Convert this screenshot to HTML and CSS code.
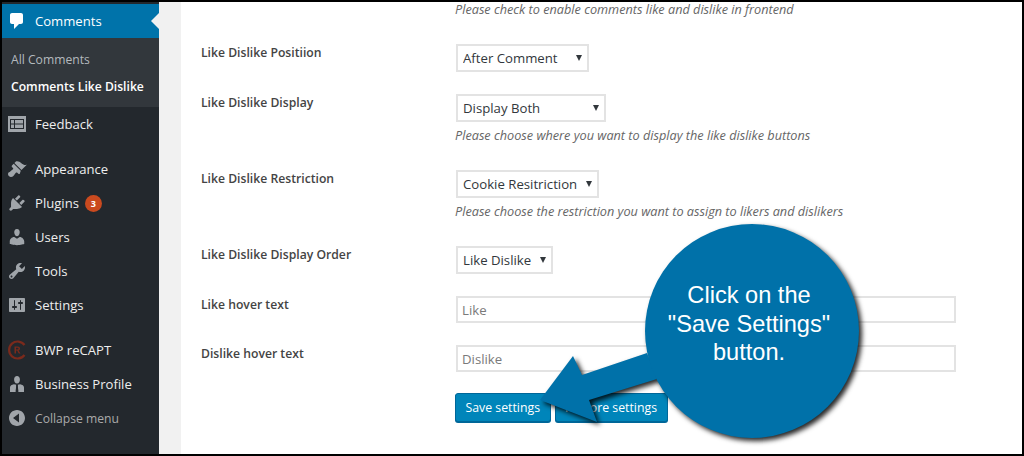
FILE: index.html
```html
<!DOCTYPE html>
<html lang="en">
<head>
<meta charset="utf-8">
<title>Comments Like Dislike</title>
<link rel="stylesheet" href="styles.css">
</head>
<body>
<div class="frame">
  <nav class="sidebar">
    <a class="item current">
      <svg class="icon" viewBox="0 0 20 20"><path d="M5 2h9c1.100 0 2 .9 2 2v7c0 1.100-.9 2-2 2h-2l-5 5v-5H5c-1.100 0-2-.9-2-2V4c0-1.100.9-2 2-2z"/></svg>
      <span>Comments</span>
    </a>
    <div class="submenu">
      <a class="sub">All Comments</a>
      <a class="sub active">Comments Like Dislike</a>
    </div>
    <a class="item">
      <svg class="icon" viewBox="0 0 20 20"><path fill-rule="evenodd" d="M1 2h18v16H1zM3 5v10h14V5zM4 6h3v3.500H4zM8 6h8v3.500H8zM4 10.500h3V14H4zM8 10.500h8V14H8z"/></svg>
      <span>Feedback</span>
    </a>
    <a class="item group">
      <svg class="icon" viewBox="0 0 20 20"><path d="M14.480 11.060L7.410 3.990l1.500-1.500c.5-.56 2.300-.47 3.510.32 1.210.8 1.430 1.280 2.910 2.100 1.180.64 2.450 1.260 4.450.85zm-.71.71L6.700 4.700 4.930 6.470c-.39.39-.39 1.020 0 1.410l1.060 1.060c.39.39.39 1.030 0 1.420-.6.6-1.430 1.110-2.210 1.690-.35.26-.7.53-1.010.84C1.430 13.230 1 14.080 1 15c0 1.660 1.340 3 3 3 .92 0 1.770-.43 2.360-1.010.31-.31.58-.66.84-1.010.58-.78 1.090-1.610 1.690-2.210.39-.39 1.020-.39 1.410 0l1.060 1.060c.39.39 1.030.39 1.420 0z"/></svg>
      <span>Appearance</span>
    </a>
    <a class="item">
      <svg class="icon" viewBox="0 0 20 20"><path d="M13.110 4.360L9.870 7.600 8 5.730l3.240-3.240c.35-.34 1.050-.2 1.560.32.52.51.66 1.210.31 1.550zm-8 1.770l.91-1.120 9.010 9.010-1.190.84c-.71.71-2.630 1.160-3.820 1.160H6.140L4.900 17.260c-.59.59-1.540.59-2.120 0-.59-.58-.59-1.530 0-2.120l1.240-1.240v-3.880c0-1.130.4-3.190 1.090-3.890zm7.260 3.970l3.240-3.240c.34-.35 1.040-.21 1.550.31.52.51.66 1.210.31 1.550l-3.240 3.250z"/></svg>
      <span>Plugins</span>
      <b class="badge">3</b>
    </a>
    <a class="item">
      <svg class="icon" viewBox="0 0 20 20"><path d="M10 9.250c-2.270 0-2.730-3.440-2.730-3.440C7 4.020 7.820 2 9.970 2c2.160 0 2.980 2.020 2.710 3.810 0 0-.41 3.440-2.680 3.440zm0 2.570L12.720 10c2.390 0 4.520 2.330 4.520 4.530v2.490s-3.650 1.130-7.240 1.130c-3.650 0-7.240-1.130-7.240-1.130v-2.490c0-2.250 1.940-4.480 4.470-4.480z"/></svg>
      <span>Users</span>
    </a>
    <a class="item">
      <svg class="icon" viewBox="0 0 20 20"><path d="M16.680 9.770c-1.340 1.340-3.300 1.670-4.950.99l-5.410 6.520c-.99.99-2.590.99-3.580 0s-.99-2.590 0-3.570l6.520-5.420c-.68-1.650-.35-3.610.99-4.950 1.280-1.280 3.120-1.620 4.720-1.060l-2.890 2.890 2.820 2.820 2.860-2.870c.53 1.580.18 3.390-1.080 4.650zM3.810 16.210c.4.39 1.040.39 1.430 0 .4-.4.4-1.040 0-1.430-.39-.4-1.030-.4-1.430 0-.39.39-.39 1.030 0 1.430z"/></svg>
      <span>Tools</span>
    </a>
    <a class="item">
      <svg class="icon" viewBox="0 0 20 20"><path fill-rule="evenodd" d="M18 16V4c0-.55-.45-1-1-1H3c-.55 0-1 .45-1 1v12c0 .55.45 1 1 1h14c.55 0 1-.45 1-1zM8 11h1c.55 0 1 .45 1 1s-.45 1-1 1H8v1.500c0 .28-.22.5-.5.5s-.5-.22-.5-.5V13H6c-.55 0-1-.45-1-1s.45-1 1-1h1V5.500c0-.28.22-.5.5-.5s.5.22.5.5V11zm5-2h-1c-.55 0-1-.45-1-1s.45-1 1-1h1V5.500c0-.28.22-.5.5-.5s.5.22.5.5V7h1c.55 0 1 .45 1 1s-.45 1-1 1h-1v5.500c0 .28-.22.5-.5.5s-.5-.22-.5-.5V9z"/></svg>
      <span>Settings</span>
    </a>
    <a class="item group">
      <svg class="icon recapt" viewBox="0 0 20 20"><path class="recapt-ring" d="M17.500 5A8.500 8.500 0 1 0 17.500 15"/><path d="M7.500 6.500h3.200c1.500 0 2.300.8 2.300 2 0 1-.6 1.700-1.500 1.900L13.500 13.500h-1.700l-1.600-2.900H9v2.900H7.500zM9 7.700v1.800h1.500c.7 0 1-.4 1-.9s-.3-.9-1-.9z"/></svg>
      <span>BWP reCAPT</span>
    </a>
    <a class="item">
      <svg class="icon" viewBox="0 0 20 20"><path d="M10 9.500c-2 0-2.900-2.200-2.900-4C7.100 3.500 8.300 2 10 2s2.900 1.500 2.900 3.500c0 1.800-.9 4-2.900 4zM6.800 10.300l2.500.5-.7 7.200H3v-4.500c0-1.700 1.800-2.800 3.800-3.200zM13.200 10.300c2 .4 3.800 1.500 3.800 3.200V18h-5.600l-.7-7.200z"/><path class="tie" d="M9.200 10.800h1.600l-.2 1.500.6 4.200-1.200 1.500-1.200-1.500.6-4.200z"/></svg>
      <span>Business Profile</span>
    </a>
    <a class="item collapse">
      <svg class="icon" viewBox="0 0 20 20"><path fill-rule="evenodd" d="M18 10c0-4.420-3.580-8-8-8s-8 3.580-8 8 3.580 8 8 8 8-3.580 8-8zM12 5.500v9L6 10z"/></svg>
      <span>Collapse menu</span>
    </a>
  </nav>

  <main class="content">
    <form class="panel">
      <p class="hint offset">Please check to enable comments like and dislike in frontend</p>

      <div class="row">
        <label class="label">Like Dislike Positiion</label>
        <div class="field">
          <div class="select-wrap w-position"><select><option>After Comment</option></select></div>
        </div>
      </div>

      <div class="row">
        <label class="label">Like Dislike Display</label>
        <div class="field">
          <div class="select-wrap w-display"><select><option>Display Both</option></select></div>
          <p class="hint">Please choose where you want to display the like dislike buttons</p>
        </div>
      </div>

      <div class="row">
        <label class="label">Like Dislike Restriction</label>
        <div class="field">
          <div class="select-wrap w-restrict"><select><option>Cookie Resitriction</option></select></div>
          <p class="hint">Please choose the restriction you want to assign to likers and dislikers</p>
        </div>
      </div>

      <div class="row">
        <label class="label">Like Dislike Display Order</label>
        <div class="field">
          <div class="select-wrap w-order"><select><option>Like Dislike</option></select></div>
        </div>
      </div>

      <div class="row">
        <label class="label">Like hover text</label>
        <div class="field"><input class="text" type="text" placeholder="Like"></div>
      </div>

      <div class="row">
        <label class="label">Dislike hover text</label>
        <div class="field"><input class="text" type="text" placeholder="Dislike"></div>
      </div>

      <div class="actions">
        <button class="btn" type="button">Save settings</button>
        <button class="btn" type="button">Restore settings</button>
      </div>
    </form>
  </main>

  <aside class="callout">
    <svg class="callout-shape" viewBox="0 0 340 230" width="340" height="230">
      <g class="callout-fill">
        <path d="M5 178 L38 134 L47 153 L112 131 L122 157 L54 178 L62 200 Z"/>
        <circle cx="217" cy="109" r="107"/>
      </g>
    </svg>
    <p class="callout-text">Click on the<br>"Save Settings"<br>button.</p>
  </aside>
</div>
</body>
</html>
```

FILE: styles.css
```css
* { box-sizing: border-box; }

html, body { margin: 0; height: 100%; }

body {
  background: #000;
  font-family: "Open Sans", "Noto Sans", sans-serif;
  overflow: hidden;
}

.frame {
  position: relative;
  display: flex;
  width: 1024px;
  height: 456px;
  padding: 2px;
}

/* Sidebar */
.sidebar {
  flex: 0 0 157px;
  display: flex;
  flex-direction: column;
  padding-top: 2px;
  background: #23282d;
}

.item {
  position: relative;
  display: flex;
  align-items: center;
  height: 34px;
  padding: 0 0 1px 33px;
  font-size: 13.100px;
  color: #eee;
  flex: none;
}

.item.group { margin-top: 11px; }

.icon {
  position: absolute;
  left: 5px;
  top: 7px;
  width: 20px;
  height: 20px;
  fill: #a0a5aa;
}

.item.current {
  background: #0073aa;
  color: #fff;
}

.item.current .icon { fill: #fff; }

.item.current::after {
  content: "";
  position: absolute;
  right: 0;
  top: 9px;
  border: 8px solid transparent;
  border-right-color: #f1f1f1;
  border-left-width: 0;
}

.submenu {
  display: flex;
  flex-direction: column;
  gap: 9px;
  height: 69px;
  padding: 13px 0 0 9px;
  background: #32373c;
  font-size: 12.150px;
  line-height: 18px;
  color: #b4b9be;
}

.sub.active {
  color: #fff;
  font-weight: 600;
}

.badge {
  display: flex;
  align-items: center;
  justify-content: center;
  width: 17px;
  height: 17px;
  margin: 1px 0 0 6px;
  border-radius: 50%;
  background: #ca4a1f;
  color: #fff;
  font-size: 9px;
  font-weight: 700;
}

.recapt { fill: #7a2a1c; }

.recapt-ring {
  fill: none;
  stroke: #7a2a1c;
  stroke-width: 2.200;
}

.tie { fill: #23282d; }

.item.collapse {
  padding-bottom: 0;
  font-size: 12.150px;
  color: #aaa;
}

/* Content */
.content {
  flex: 1;
  min-width: 0;
  padding-left: 22px;
  background: #f1f1f1;
}

.panel {
  display: flex;
  flex-direction: column;
  gap: 22px;
  height: 100%;
  padding-left: 20px;
  background: #fff;
  color: #32373c;
}

.row {
  display: grid;
  grid-template-columns: 255px 1fr;
  align-items: start;
}

.label {
  font-size: 12.200px;
  font-weight: 600;
  line-height: 18px;
  color: #444;
}

.hint {
  margin: 6px 0;
  font-size: 12.700px;
  font-style: italic;
  line-height: 14px;
  color: #666;
}

.field .hint { margin-left: -1px; }

.hint.offset {
  margin: 0 0 6px 254px;
}

.select-wrap {
  position: relative;
  height: 28px;
}

.select-wrap::after {
  content: "";
  position: absolute;
  right: 7px;
  top: 11px;
  border-style: solid;
  border-width: 6px 3.500px 0;
  border-color: #32373c transparent transparent;
}

.w-position { width: 133px; }
.w-display { width: 150px; }
.w-restrict { width: 143px; }
.w-order { width: 97px; }

select {
  display: block;
  width: 100%;
  height: 100%;
  padding: 0 5px;
  appearance: none;
  border: 2px solid #e3e3e3;
  border-radius: 0;
  background: #fff;
  font-family: inherit;
  font-size: 13.200px;
  color: #32373c;
}

.text {
  display: block;
  width: 500px;
  height: 27px;
  padding: 0 4px;
  border: 2px solid #e3e3e3;
  background: #fff;
  font-family: inherit;
  font-size: 13.200px;
  outline: 0;
}

.text::placeholder {
  color: #7a7a7a;
  opacity: 1;
}

.actions {
  display: flex;
  gap: 4px;
  margin: -1px 0 0 254px;
}

.btn {
  height: 29px;
  padding: 0 9.500px;
  border: 1px solid #006799;
  border-radius: 3px;
  background: #0085ba;
  box-shadow: 0 1px 0 #006799;
  color: #fff;
  font-family: inherit;
  font-size: 12.300px;
}

/* Callout */
.callout {
  position: absolute;
  left: 535px;
  top: 222px;
  width: 340px;
  height: 230px;
}

.callout-shape { display: block; overflow: visible; }

.callout-fill {
  fill: #0071a9;
  filter: drop-shadow(3px 3px 2.500px rgba(0, 0, 0, .85));
}

.callout-text {
  position: absolute;
  left: 124px;
  top: 59px;
  width: 180px;
  margin: 0;
  font-family: "Liberation Sans", Arial, sans-serif;
  font-size: 23.600px;
  line-height: 28.500px;
  text-align: center;
  color: #fff;
}
```
